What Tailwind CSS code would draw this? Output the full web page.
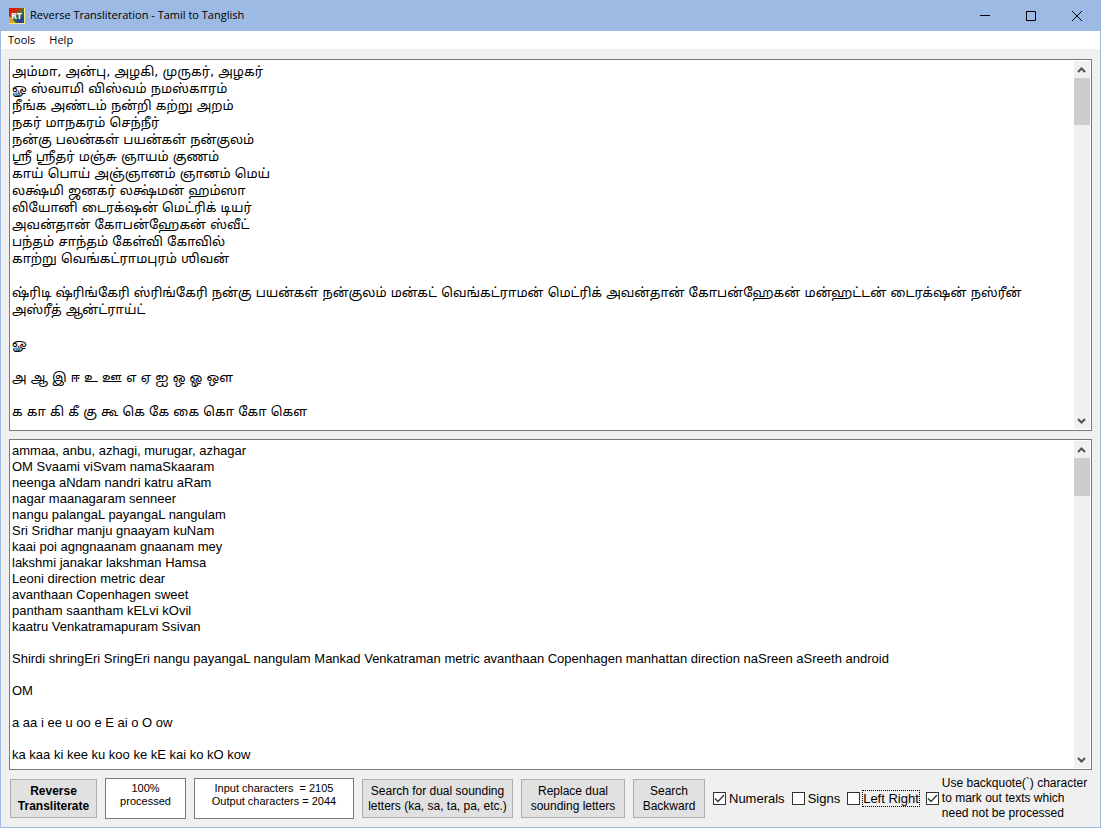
<!DOCTYPE html>
<html lang="en">

<head>
  <meta charset="UTF-8" />
  <meta name="viewport" content="width=device-width, initial-scale=1.0" />
  <title>Reverse Transliteration - Tamil to Tanglish</title>
  <script src="https://cdn.jsdelivr.net/npm/@tailwindcss/browser@4"></script>
</head>

<body class="min-h-screen flex flex-col bg-[#f0f0f0] border border-t-0 border-[#9cbae3] text-black text-[13px] font-['Liberation_Sans',Arial,sans-serif]">

  <!-- Title bar -->
  <header class="flex items-center h-[31px] bg-[#9cbae3] pl-2 font-['Open_Sans','Noto_Sans',sans-serif]">
    <svg class="w-4 h-4 mr-[5px]" viewBox="0 0 16 16">
      <defs>
        <linearGradient id="iconFill" x1="0" y1="0" x2="1" y2="1">
          <stop offset="0.3" stop-color="#d8200c" />
          <stop offset="0.45" stop-color="#8a5a20" />
          <stop offset="0.55" stop-color="#2b7a3a" />
          <stop offset="0.8" stop-color="#2c3fa0" />
        </linearGradient>
      </defs>
      <rect width="16" height="16" fill="#f4ef7a" />
      <rect width="15" height="15" fill="url(#iconFill)" />
      <path d="M0 15V8L7 15Z" fill="#e8a020" />
      <text x="7.500" y="11" text-anchor="middle" font-family="Open Sans" font-size="9" font-weight="bold" fill="#fff">RT</text>
    </svg>
    <h1 class="text-[11px]">Reverse Transliteration - Tamil to Tanglish</h1>
    <div class="ml-auto flex h-full">
      <button type="button" aria-label="Minimize" class="w-[46px] flex items-center justify-center">
        <svg class="w-2.5 h-2.5" viewBox="0 0 10 10" fill="none" stroke="#000"><path d="M0 4.500H10" /></svg>
      </button>
      <button type="button" aria-label="Maximize" class="w-[46px] flex items-center justify-center">
        <svg class="w-2.5 h-2.5" viewBox="0 0 10 10" fill="none" stroke="#000"><path d="M.5 .5H9.500V9.500H.5Z" /></svg>
      </button>
      <button type="button" aria-label="Close" class="w-[46px] flex items-center justify-center">
        <svg class="w-2.5 h-2.5" viewBox="0 0 10 10" fill="none" stroke="#000"><path d="M0 0L10 10M10 0L0 10" /></svg>
      </button>
    </div>
  </header>

  <nav class="flex h-[18px] items-center bg-white px-[7px] gap-3.5 text-[11px] font-['Open_Sans','Noto_Sans',sans-serif]">
    <button type="button">Tools</button>
    <button type="button">Help</button>
  </nav>

  <main class="flex-1 flex flex-col gap-2 px-2 pt-2.5">
    <!-- Tamil input -->
    <div class="flex grow-372 basis-0 bg-white border border-[#7a7a7a] p-px">
      <textarea id="inputText" aria-label="Tamil text" spellcheck="false" class="flex-1 resize-none outline-none pl-px pt-0.5 pr-2 text-[13px] leading-[17px] [scrollbar-width:none] font-['DejaVu_Sans','Noto_Sans_Tamil','Noto_Sans',sans-serif]">அம்மா, அன்பு, அழகி, முருகர், அழகர்
ௐ ஸ்வாமி விஸ்வம் நமஸ்காரம்
நீங்க அண்டம் நன்றி கற்று அறம்
நகர் மாநகரம் செந்நீர்
நன்கு பலன்கள் பயன்கள் நன்குலம்
ஸ்ரீ ஸ்ரீதர் மஞ்சு ஞாயம் குணம்
காய் பொய் அஞ்ஞானம் ஞானம் மெய்
லக்ஷ்மி ஜனகர் லக்ஷ்மன் ஹம்ஸா
லியோனி டைரக்‌ஷன் மெட்ரிக் டியர்
அவன்தான் கோபன்ஹேகன் ஸ்வீட்
பந்தம் சாந்தம் கேள்வி கோவில்
காற்று வெங்கட்ராமபுரம் ஶிவன்

ஷ்ரிடி ஷ்ரிங்கேரி ஸ்ரிங்கேரி நன்கு பயன்கள் நன்குலம் மன்கட் வெங்கட்ராமன் மெட்ரிக் அவன்தான் கோபன்ஹேகன் மன்ஹட்டன் டைரக்‌ஷன் நஸ்‌ரீன் அஸ்‌ரீத் ஆன்ட்ராய்ட்

ௐ

அ ஆ இ ஈ உ ஊ எ ஏ ஐ ஒ ஓ ஔ

க கா கி கீ கு கூ கெ கே கை கொ கோ கௌ</textarea>
      <div class="w-4 flex flex-col items-center bg-[#f0f0f0]">
        <svg class="w-4 h-[17px]" viewBox="0 0 16 17" fill="none" stroke="#505050" stroke-width="2"><path d="M4 11L7.500 7.500L11 11" /></svg>
        <div class="w-full h-[47px] bg-[#cdcdcd]"></div>
        <svg class="w-4 h-[17px] mt-auto" viewBox="0 0 16 17" fill="none" stroke="#505050" stroke-width="2"><path d="M4 7L7.500 10.500L11 7" /></svg>
      </div>
    </div>

    <!-- Tanglish output -->
    <div class="flex grow-331 basis-0 bg-white border border-[#7a7a7a] p-px">
      <textarea id="outputText" aria-label="Tanglish text" spellcheck="false" class="flex-1 resize-none outline-none pl-px pt-0.5 pr-2 text-[13px] leading-4 [scrollbar-width:none]">ammaa, anbu, azhagi, murugar, azhagar
OM Svaami viSvam namaSkaaram
neenga aNdam nandri katru aRam
nagar maanagaram senneer
nangu palangaL payangaL nangulam
Sri Sridhar manju gnaayam kuNam
kaai poi agngnaanam gnaanam mey
lakshmi janakar lakshman Hamsa
Leoni direction metric dear
avanthaan Copenhagen sweet
pantham saantham kELvi kOvil
kaatru Venkatramapuram Ssivan

Shirdi shringEri SringEri nangu payangaL nangulam Mankad Venkatraman metric avanthaan Copenhagen manhattan direction naSreen aSreeth android

OM

a aa i ee u oo e E ai o O ow

ka kaa ki kee ku koo ke kE kai ko kO kow</textarea>
      <div class="w-4 flex flex-col items-center bg-[#f0f0f0]">
        <svg class="w-4 h-[17px]" viewBox="0 0 16 17" fill="none" stroke="#505050" stroke-width="2"><path d="M4 11L7.500 7.500L11 11" /></svg>
        <div class="w-full h-[38px] bg-[#cdcdcd]"></div>
        <svg class="w-4 h-[17px] mt-auto" viewBox="0 0 16 17" fill="none" stroke="#505050" stroke-width="2"><path d="M4 7L7.500 10.500L11 7" /></svg>
      </div>
    </div>
  </main>

  <!-- Controls -->
  <footer class="flex items-center h-[57px] pl-[9px] gap-2 leading-[15px] whitespace-nowrap">
    <button type="button" class="w-[87px] h-[39px] bg-[#e1e1e1] border border-[#adadad] text-xs leading-[15px] font-bold">Reverse<br>Transliterate</button>
    <output class="w-[81px] h-[41px] bg-white border border-[#7a7a7a] pt-[3px] text-[11px] leading-[13px] text-center">100%<br>processed</output>
    <output class="w-40 h-[41px] bg-white border border-[#7a7a7a] pt-[3px] text-[11px] leading-[13px] text-center">Input characters &nbsp;= 2105<br>Output characters = 2044</output>
    <button type="button" class="w-[151px] h-[39px] bg-[#e1e1e1] border border-[#adadad] text-xs leading-[15px]">Search for dual sounding<br>letters (ka, sa, ta, pa, etc.)</button>
    <button type="button" class="w-[104px] h-[39px] bg-[#e1e1e1] border border-[#adadad] text-xs leading-[15px]">Replace dual<br>sounding letters</button>
    <button type="button" class="w-[72px] h-[39px] bg-[#e1e1e1] border border-[#adadad] text-xs leading-[15px]">Search<br>Backward</button>

    <div class="flex items-center gap-[7px]">
      <label class="flex items-center gap-[3px]">
        <span class="grid">
          <input type="checkbox" checked class="peer appearance-none col-start-1 row-start-1 w-[13px] h-[13px] bg-white border border-[#333]">
          <svg class="hidden peer-checked:block col-start-1 row-start-1 w-[13px] h-[13px]" viewBox="0 0 13 13" fill="none" stroke="#333" stroke-width="1.3"><path d="M2 6.500L5 9.500L11 3" /></svg>
        </span>
        Numerals
      </label>
      <label class="flex items-center gap-[3px]">
        <span class="grid">
          <input type="checkbox" class="peer appearance-none col-start-1 row-start-1 w-[13px] h-[13px] bg-white border border-[#333]">
          <svg class="hidden peer-checked:block col-start-1 row-start-1 w-[13px] h-[13px]" viewBox="0 0 13 13" fill="none" stroke="#333" stroke-width="1.3"><path d="M2 6.500L5 9.500L11 3" /></svg>
        </span>
        Signs
      </label>
      <label class="flex items-center gap-[3px]">
        <span class="grid">
          <input type="checkbox" class="peer appearance-none col-start-1 row-start-1 w-[13px] h-[13px] bg-white border border-[#333]">
          <svg class="hidden peer-checked:block col-start-1 row-start-1 w-[13px] h-[13px]" viewBox="0 0 13 13" fill="none" stroke="#333" stroke-width="1.3"><path d="M2 6.500L5 9.500L11 3" /></svg>
        </span>
        <span class="outline-1 outline-dotted outline-black">Left Right</span>
      </label>
      <label class="flex items-center gap-[3px] text-xs leading-[15px]">
        <span class="grid">
          <input type="checkbox" checked class="peer appearance-none col-start-1 row-start-1 w-[13px] h-[13px] bg-white border border-[#333]">
          <svg class="hidden peer-checked:block col-start-1 row-start-1 w-[13px] h-[13px]" viewBox="0 0 13 13" fill="none" stroke="#333" stroke-width="1.3"><path d="M2 6.500L5 9.500L11 3" /></svg>
        </span>
        <span>Use backquote(`) character<br>to mark out texts which<br>need not be processed</span>
      </label>
    </div>
  </footer>
</body>

</html>
